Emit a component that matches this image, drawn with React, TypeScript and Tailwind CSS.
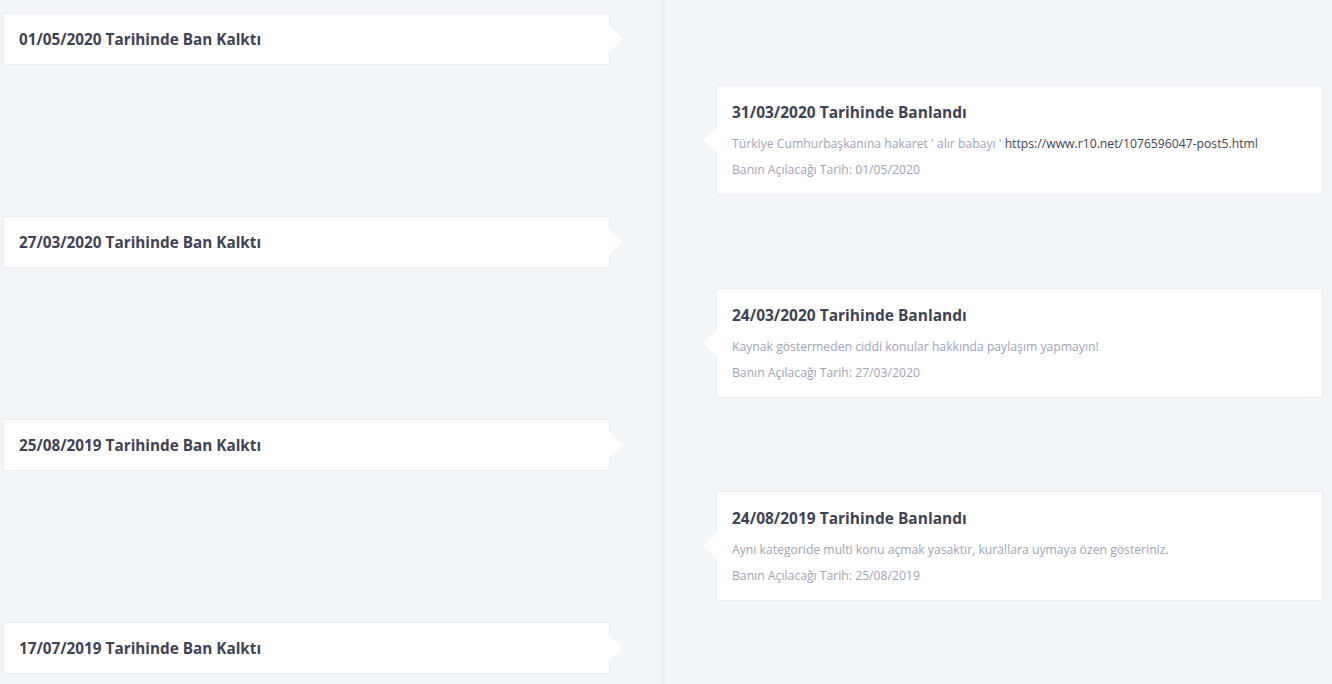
type Ban = {
  bannedAt: string;
  liftedAt: string;
  reason: string;
  link?: string;
};

const bans: Ban[] = [
  {
    bannedAt: "31/03/2020",
    liftedAt: "01/05/2020",
    reason: "Türkiye Cumhurbaşkanına hakaret ' alır babayı '",
    link: "https://www.r10.net/1076596047-post5.html",
  },
  {
    bannedAt: "24/03/2020",
    liftedAt: "27/03/2020",
    reason: "Kaynak göstermeden ciddi konular hakkında paylaşım yapmayın!",
  },
  {
    bannedAt: "24/08/2019",
    liftedAt: "25/08/2019",
    reason:
      "Aynı kategoride multi konu açmak yasaktır, kurallara uymaya özen gösteriniz.",
  },
];

const lifted = ["01/05/2020", "27/03/2020", "25/08/2019", "17/07/2019"];

function LiftedCard({ date }: { date: string }) {
  return (
    <div className="relative ml-[3px] flex h-[52px] w-[607px] items-center border border-[#ebedf3] bg-white px-[15px]">
      <p className="text-[15.3px] leading-[22px] font-bold text-[#3f4254]">
        {date} Tarihinde Ban Kalktı
      </p>
      {/* arrow pointing at the timeline */}
      <span className="absolute top-1/2 -right-[14px] h-0 w-0 -translate-y-1/2 border-y-[13px] border-l-[14px] border-y-transparent border-l-white" />
    </div>
  );
}

function BanCard({ ban }: { ban: Ban }) {
  return (
    <div className="relative ml-[51px] h-[110px] w-[607px] border border-[#ebedf3] bg-white px-[15px] pt-[15px]">
      <span className="absolute top-1/2 -left-[14px] h-0 w-0 -translate-y-1/2 border-y-[13px] border-r-[14px] border-y-transparent border-r-white" />
      <p className="text-[15.5px] leading-[22px] font-bold text-[#3f4254]">
        {ban.bannedAt} Tarihinde Banlandı
      </p>
      <p className="mt-[11px] text-[12.2px] leading-[20px] text-[#a1a5b7]">
        {ban.reason}
        {ban.link ? (
          <>
            {" "}
            <a href="#" className="text-[#3f4254]">
              {ban.link}
            </a>
          </>
        ) : null}
      </p>
      <p className="mt-[6px] text-[12.2px] leading-[20px] text-[#a1a5b7]">
        Banın Açılacağı Tarih: {ban.liftedAt}
      </p>
    </div>
  );
}

export default function App() {
  return (
    <div
      className="flex h-[684px] overflow-hidden bg-[#f3f6f9]"
      style={{ fontFamily: '"Open Sans", "Noto Sans", sans-serif' }}
    >
      <div className="flex w-[662px] shrink-0 flex-col gap-[151px] pt-[13px]">
        {lifted.map((d) => (
          <LiftedCard key={d} date={d} />
        ))}
      </div>
      <div className="w-[3px] shrink-0 bg-[#ebeef3]" />
      <div className="flex flex-1 flex-col gap-[93px] pt-[85px]">
        {bans.map((b) => (
          <BanCard key={b.bannedAt} ban={b} />
        ))}
      </div>
    </div>
  );
}
